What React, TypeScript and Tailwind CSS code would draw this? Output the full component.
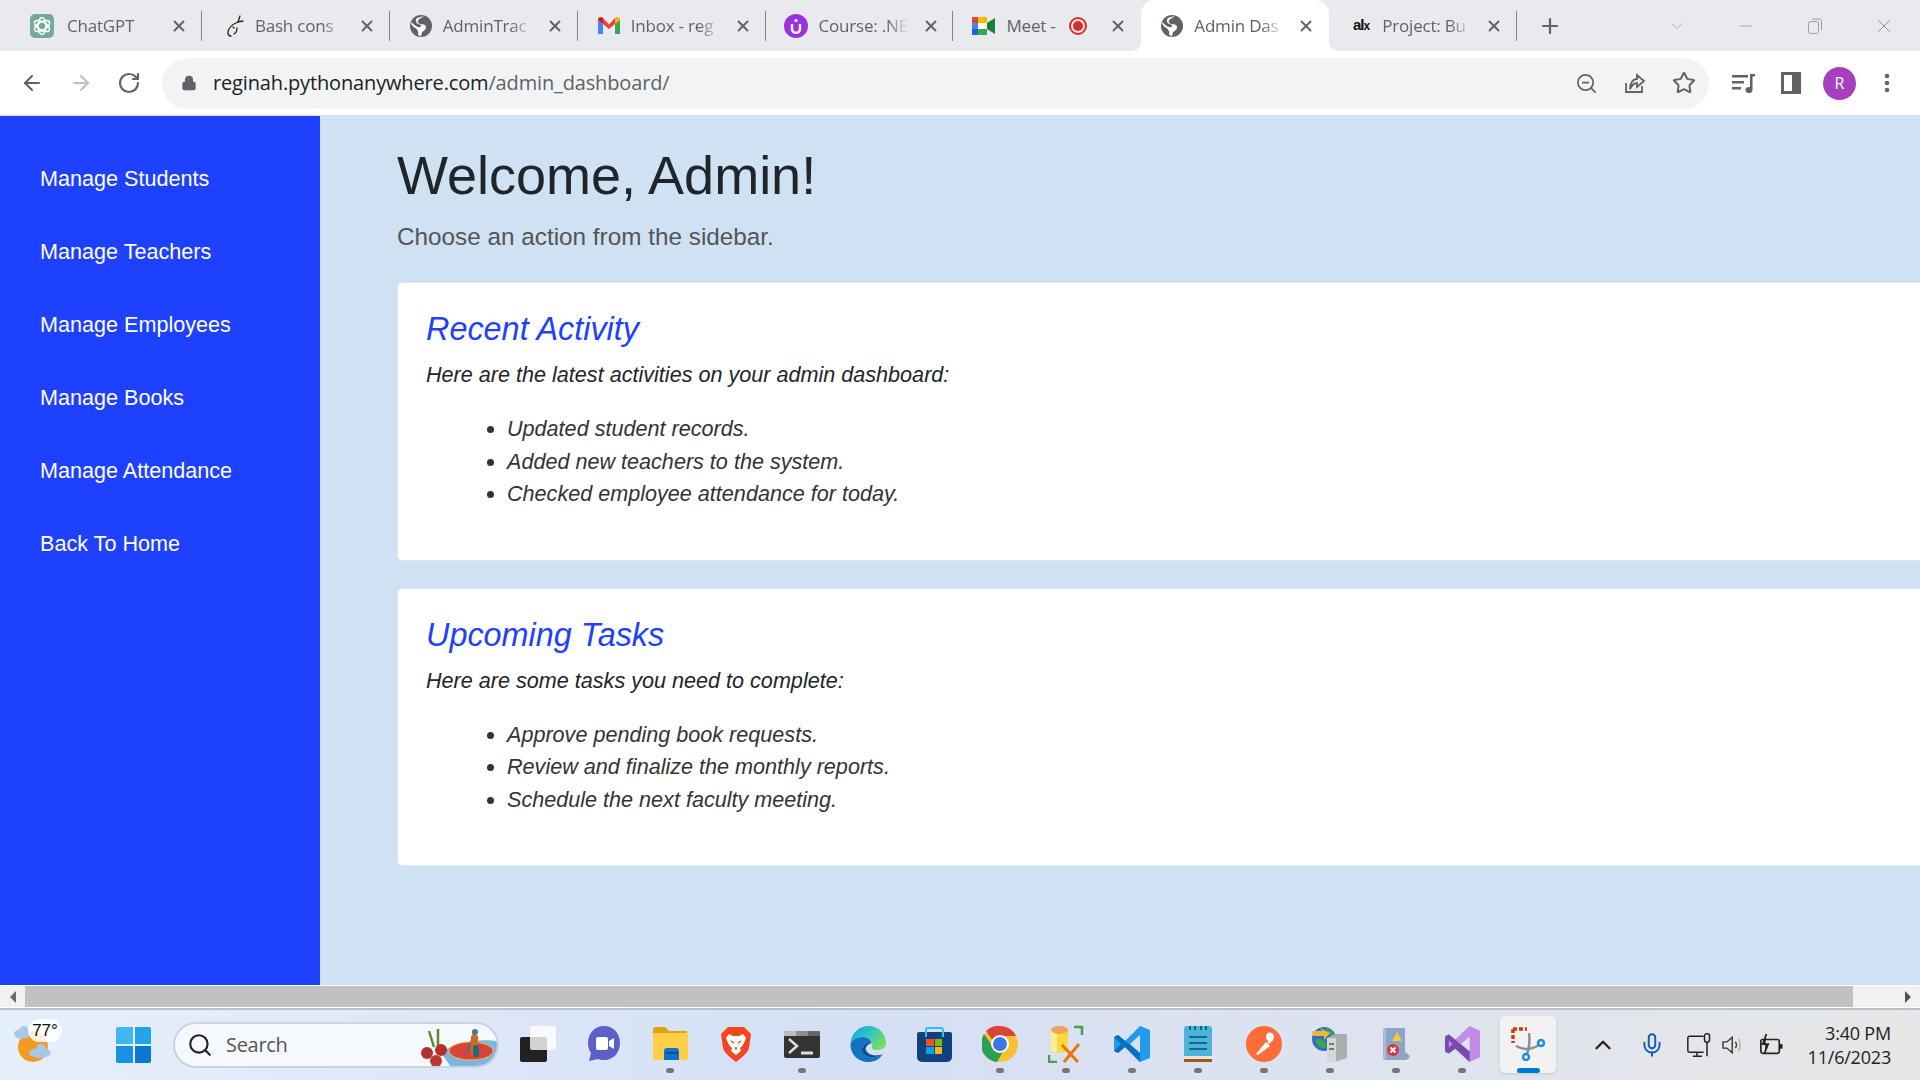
import { ReactNode } from "react";
import { X, Plus, ChevronDown, Minus, ArrowLeft, ArrowRight, RotateCw, Lock, ZoomOut, Star, EllipsisVertical, Search, ChevronUp, Mic } from "lucide-react";

const sans = "font-['Liberation_Sans',Arial,sans-serif]";

// favicons for the tab strip
function ChatGptIcon() {
  return (
    <svg width="24" height="24" viewBox="0 0 24 24" className="mr-[2px]">
      <rect width="24" height="24" rx="5" fill="#74aa9c" />
      <g fill="none" stroke="#fff" strokeWidth="1.6">
        <ellipse cx="12" cy="12" rx="4" ry="8.5" />
        <ellipse cx="12" cy="12" rx="4" ry="8.5" transform="rotate(60 12 12)" />
        <ellipse cx="12" cy="12" rx="4" ry="8.5" transform="rotate(120 12 12)" />
      </g>
    </svg>
  );
}

function SnakeIcon() {
  return (
    <svg width="18" height="22" viewBox="0 0 18 22" fill="none" stroke="#222" strokeWidth="1.3" strokeLinecap="round">
      <path d="M14 1 L12 7 L17 6" />
      <path d="M12 7 C7 9 2 13 2 18 C2 20 3 21 5 21" />
      <path d="M7 12 L8 13 M11 13 C11 16 10 18 8 19" />
    </svg>
  );
}

function GlobeIcon() {
  return (
    <svg width="22" height="22" viewBox="0 0 22 22">
      <circle cx="11" cy="11" r="11" fill="#5f6368" />
      <path d="M14 1 C11 3.5 7 4.5 8 7.5 C9 10 14 8.5 15.5 10.5 C17 13 15 15.5 12 17 L11 21.5 L8 19.5 C9 16.5 7 14 4.5 12.5 C3 11.5 2 10 1 9 L1.5 7 C3 9.5 5.5 11 8 12 C11 12.5 12.5 11 10 9.5 C6.5 9 4.5 6 7 3 Z" fill="#fff" />
    </svg>
  );
}

function GmailIcon() {
  return (
    <svg width="22" height="17" viewBox="0 0 22 17">
      <path d="M0 3 V17 H5 V7 Z" fill="#4285f4" />
      <path d="M17 7 V17 H22 V3 Z" fill="#34a853" />
      <path d="M0 3 C0 0.5 3 -0.5 5 1 L11 7.5 L17 1 C19 -0.5 22 0.5 22 3 L17 7 L11 12 L5 7 Z" fill="#ea4335" />
      <path d="M17 1 C19 -0.5 22 0.5 22 3 L17 7 Z" fill="#fbbc04" />
      <path d="M0 3 C0 0.5 3 -0.5 5 1 V7 Z" fill="#c5221f" />
    </svg>
  );
}

function CourseIcon() {
  return (
    <svg width="24" height="24" viewBox="0 0 24 24">
      <circle cx="12" cy="12" r="12" fill="#9b30e0" />
      <path d="M8 10 V15 C8 20 16 20 16 15 V10" fill="none" stroke="#fff" strokeWidth="2.4" />
      <circle cx="12" cy="6.5" r="1.6" fill="#fff" />
    </svg>
  );
}

function MeetIcon() {
  return (
    <svg width="23" height="18" viewBox="0 0 23 18">
      <rect x="0" y="0" width="6" height="6" fill="#ea4335" />
      <rect x="6" y="0" width="9" height="6" fill="#fbbc04" />
      <rect x="0" y="6" width="6" height="6" fill="#4285f4" />
      <rect x="0" y="12" width="6" height="6" fill="#1967d2" />
      <rect x="6" y="12" width="9" height="6" fill="#34a853" />
      <rect x="6" y="6" width="9" height="6" fill="#fff" />
      <path d="M15 6 L23 1 V17 L15 12 Z" fill="#188038" />
    </svg>
  );
}

function AlxIcon() {
  return <span className={`${sans} mr-[2px] text-[15px] font-bold tracking-[-1px] text-[#111]`}>al<span className="text-[12px]">x</span></span>;
}

type Tab = { title: string; icon: ReactNode; active?: boolean; rec?: boolean; sep?: boolean };

const tabs: Tab[] = [
  { title: "ChatGPT", icon: <ChatGptIcon />, sep: true },
  { title: "Bash cons", icon: <SnakeIcon />, sep: true },
  { title: "AdminTrac", icon: <GlobeIcon />, sep: true },
  { title: "Inbox - reg", icon: <GmailIcon />, sep: true },
  { title: "Course: .NE", icon: <CourseIcon />, sep: true },
  { title: "Meet -", icon: <MeetIcon />, rec: true },
  { title: "Admin Das", icon: <GlobeIcon />, active: true },
  { title: "Project: Bu", icon: <AlxIcon />, sep: true },
];

function TabItem({ tab }: { tab: Tab }) {
  return (
    <div className={`relative flex h-full w-[187.9px] shrink-0 items-center ${tab.active ? "rounded-t-[14px] bg-white" : ""}`}>
      {tab.active && (
        <>
          <div className="absolute bottom-0 left-[-10px] h-[10px] w-[10px] bg-[radial-gradient(circle_at_0_0,transparent_10px,white_10.5px)]" />
          <div className="absolute bottom-0 right-[-10px] h-[10px] w-[10px] bg-[radial-gradient(circle_at_100%_0,transparent_10px,white_10.5px)]" />
        </>
      )}
      <div className="flex w-[53px] shrink-0 items-center justify-end pr-[11px]">{tab.icon}</div>
      {tab.rec ? (
        <div className="w-[50px] whitespace-nowrap font-['Open_Sans',sans-serif] text-[17px] tracking-[-0.2px] text-[#5f6368]">{tab.title}</div>
      ) : (
        <div className="flex w-[90px] items-center overflow-hidden whitespace-nowrap font-['Open_Sans',sans-serif] text-[17px] tracking-[-0.2px] text-[#5f6368] [mask-image:linear-gradient(to_right,black_75%,transparent)]">
          {tab.title}
        </div>
      )}
      {tab.rec && (
        <div className="ml-[13px] flex h-[18px] w-[18px] items-center justify-center rounded-full border-2 border-[#d93025]">
          <div className="h-[10px] w-[10px] rounded-full bg-[#d93025]" />
        </div>
      )}
      <X className="absolute left-[156px] text-[#5f6368]" size={18} strokeWidth={2.5} />
      {tab.sep && <div className="absolute right-0 top-[11px] h-[30px] w-px bg-[#80868b]" />}
    </div>
  );
}

function ChromeBar() {
  return (
    <div className="flex h-[51px] shrink-0 items-stretch bg-[#e8eaed] pl-[14px]">
      {tabs.map((t) => (
        <TabItem key={t.title} tab={t} />
      ))}
      <div className="ml-[21px] flex items-center">
        <Plus size={24} strokeWidth={2.2} className="text-[#5f6368]" />
      </div>
      <div className="ml-[105px] flex items-center">
        <ChevronDown size={20} strokeWidth={1} className="text-[#9aa0a6]" />
      </div>
      <div className="ml-[49px] flex items-center">
        <Minus size={20} strokeWidth={1} className="text-[#9aa0a6]" />
      </div>
      <div className="ml-[51px] flex items-center">
        <svg width="16" height="18" viewBox="0 0 16 18" fill="none" stroke="#9aa0a6">
          <rect x="1.5" y="4.5" width="10" height="12" rx="2" />
          <path d="M5 2 H12 C14 2 14.5 3 14.5 5 V13" />
        </svg>
      </div>
      <div className="ml-[50px] flex items-center">
        <X size={22} strokeWidth={1} className="text-[#80868b]" />
      </div>
    </div>
  );
}

function Toolbar() {
  return (
    <div className="flex h-[65px] shrink-0 items-center border-b border-[#dcdfe3] bg-white">
      <div className="flex w-[162px] shrink-0 items-center pl-[20px]">
        <ArrowLeft size={24} strokeWidth={2} className="text-[#5f6368]" />
        <ArrowRight size={24} strokeWidth={2} className="ml-[25px] text-[#bdc1c6]" />
        <RotateCw size={24} strokeWidth={2.2} className="ml-[24px] text-[#5f6368]" />
      </div>
      <div className="flex h-[51px] w-[1547px] shrink-0 items-center rounded-full bg-[#f1f3f4] pl-[19px]">
        <Lock size={16} fill="#5f6368" className="text-[#5f6368]" />
        <div className="ml-[16px] font-['Open_Sans',sans-serif] text-[20px] tracking-[-0.15px] text-[#202124]">
          reginah.pythonanywhere.com<span className="text-[#5f6368]">/admin_dashboard/</span>
        </div>
        <div className="ml-auto flex items-center">
          <ZoomOut size={23} strokeWidth={1.8} className="text-[#5f6368]" />
          <svg width="24" height="24" viewBox="0 0 24 24" fill="none" stroke="#5f6368" strokeWidth="1.8" className="ml-[25px]">
            <path d="M3 12 V21 H19 V15" />
            <path d="M7 18 C7 12 10 8 14 8 V4 L21 10 L14 16 V12 C11 12 9 14 7 18 Z" />
          </svg>
          <Star size={24} strokeWidth={2} className="ml-[25px] mr-[13px] text-[#5f6368]" />
        </div>
      </div>
      <div className="flex items-center">
        <svg width="24" height="24" viewBox="0 0 24 24" fill="#5f6368" className="ml-[22px]">
          <rect x="1" y="4" width="16" height="2.5" />
          <rect x="1" y="10" width="12" height="2.5" />
          <rect x="1" y="16" width="9" height="2.5" />
          <rect x="19" y="3" width="2.5" height="15" />
          <rect x="19" y="3" width="5" height="2.5" />
          <ellipse cx="18" cy="19" rx="3.5" ry="3" />
        </svg>
        <div className="ml-[26px] h-[22px] w-[20px] border-[3px] border-r-[9px] border-[#5f6368]" />
        <div className="ml-[22px] flex h-[33px] w-[33px] items-center justify-center rounded-full bg-[#a83fbf] font-['Open_Sans',sans-serif] text-[16px] text-white">R</div>
        <EllipsisVertical size={24} strokeWidth={2.6} className="ml-[19px] text-[#5f6368]" />
      </div>
    </div>
  );
}

const navItems = ["Manage Students", "Manage Teachers", "Manage Employees", "Manage Books", "Manage Attendance", "Back To Home"];

function Sidebar() {
  return (
    <aside className="w-[320px] shrink-0 bg-[#1e40ff] pl-[40px] pt-[27px]">
      {navItems.map((item) => (
        <div key={item} className={`${sans} flex h-[73px] items-center text-[21.6px] text-white`}>
          {item}
        </div>
      ))}
    </aside>
  );
}

function Card({ title, intro, items, top }: { title: string; intro: string; items: string[]; top: string }) {
  return (
    <section className={`${top} w-[1700px] rounded-[5px] border border-[#dfe6ee] bg-white pb-[49px] pl-[28px] pt-[27px] italic ${sans}`}>
      <h3 className="text-[32.4px] leading-[38px] text-[#1e40ff]">{title}</h3>
      <p className="mt-[11px] text-[21.6px] leading-[32.4px] text-[#212529]">{intro}</p>
      <ul className="ml-[81px] mt-[22px] list-disc text-[21.6px] leading-[32.4px] text-[#333]">
        {items.map((i) => (
          <li key={i}>{i}</li>
        ))}
      </ul>
    </section>
  );
}

function Main() {
  return (
    <main className={`min-w-0 flex-1 overflow-hidden bg-[#cfe2f3] pl-[77px] pt-[27px] ${sans}`}>
      <h1 className="text-[54px] leading-[64px] text-[#212529]">Welcome, Admin!</h1>
      <p className="mt-[12px] text-[24.3px] leading-[36px] text-[#555]">Choose an action from the sidebar.</p>
      <Card
        top="mt-[27px]"
        title="Recent Activity"
        intro="Here are the latest activities on your admin dashboard:"
        items={["Updated student records.", "Added new teachers to the system.", "Checked employee attendance for today."]}
      />
      <Card
        top="mt-[27px]"
        title="Upcoming Tasks"
        intro="Here are some tasks you need to complete:"
        items={["Approve pending book requests.", "Review and finalize the monthly reports.", "Schedule the next faculty meeting."]}
      />
    </main>
  );
}

function ScrollBar() {
  return (
    <div className="flex h-[25px] shrink-0 flex-col bg-[#b9c0cc]">
      <div className="flex h-[23px] items-stretch border-y border-white bg-[#f1f1f1]">
        <div className="flex w-[25px] items-center justify-center">
          <div className="h-0 w-0 border-y-[6px] border-r-[6px] border-y-transparent border-r-[#6b6b6b]" />
        </div>
        <div className="flex-1 bg-[#c1c1c1]" />
        <div className="flex w-[67px] items-center justify-end pr-[9px]">
          <div className="h-0 w-0 border-y-[6px] border-l-[6px] border-y-transparent border-l-[#505050]" />
        </div>
      </div>
    </div>
  );
}

// taskbar icons
function WeatherIcon() {
  return (
    <div className="relative h-[50px] w-[50px]">
      <svg width="50" height="50" viewBox="0 0 50 50">
        <circle cx="25" cy="27" r="15" fill="#f39a1f" />
        <g fill="#a9c6ea">
          <ellipse cx="14" cy="14" rx="8" ry="5" />
          <ellipse cx="16" cy="10" rx="4" ry="4" />
          <ellipse cx="32" cy="33" rx="11" ry="5" />
          <ellipse cx="33" cy="29" rx="5" ry="5" />
        </g>
      </svg>
      <div className={`absolute left-[20px] top-[-1px] flex h-[23px] w-[34px] items-center justify-center rounded-full bg-white/85 ${sans} text-[17px] text-[#111]`}>77°</div>
    </div>
  );
}

function WindowsIcon() {
  return (
    <div className="grid h-[36px] w-[35px] shrink-0 grid-cols-2 gap-[2px]">
      <div className="rounded-tl-[2px] bg-[#3fb6f2]" />
      <div className="rounded-tr-[2px] bg-[#23a3ea]" />
      <div className="rounded-bl-[2px] bg-[#1a90e0]" />
      <div className="rounded-br-[2px] bg-[#0a78d4]" />
    </div>
  );
}

function SearchArt() {
  return (
    <svg width="76" height="44" viewBox="0 0 76 44" className="shrink-0">
      <path d="M20 30 C34 18 60 16 76 18 V36 C72 41 60 44 30 44 Z" fill="#7fb4dc" />
      <ellipse cx="50" cy="28" rx="22" ry="9" fill="#d9433a" stroke="#e8c23d" />
      <path d="M53 10 L48 26 L44 29" stroke="#50738a" strokeWidth="2" fill="none" />
      <rect x="50" y="12" width="7" height="20" rx="2" fill="#d06a24" />
      <rect x="52" y="22" width="6" height="12" rx="2" fill="#1f6b80" />
      <circle cx="54" cy="9" r="3" fill="#3d7f88" />
      <path d="M8 8 L13 24 M17 6 L17 22 L22 30" stroke="#5a8a30" strokeWidth="2.5" fill="none" />
      <circle cx="6" cy="30" r="6" fill="#b5302d" />
      <circle cx="15" cy="38" r="6" fill="#c23531" />
      <circle cx="20" cy="27" r="6" fill="#b5302d" />
    </svg>
  );
}

function TaskViewIcon() {
  return (
    <div className="relative h-[36px] w-[36px]">
      <div className="absolute bottom-0 left-0 h-[25px] w-[27px] rounded-[2px] bg-[#222]" />
      <div className="absolute right-0 top-0 h-[24px] w-[26px] rounded-[2px] bg-white/80" />
    </div>
  );
}

function TeamsIcon() {
  return (
    <svg width="34" height="38" viewBox="0 0 34 38">
      <path d="M17 1 C8 1 1 8 1 18 C1 22 2 25 4 28 L2 36 L11 34 C13 35 15 35 17 35 C27 35 33 27 33 18 C33 8 26 1 17 1 Z" fill="#5b5fc7" />
      <rect x="9" y="12" width="12" height="13" rx="2" fill="#fff" />
      <path d="M22 16 L27 13 V24 L22 21 Z" fill="#fff" />
    </svg>
  );
}

function FolderIcon() {
  return (
    <svg width="36" height="36" viewBox="0 0 36 36">
      <path d="M1 3 C1 2 2 1 3 1 H13 L17 5 H35 V33 H1 Z" fill="#dfa40f" />
      <rect x="1" y="7" width="35" height="27" rx="1" fill="#ffcf47" />
      <path d="M12 34 V25 C12 23 13 22 15 22 H24 C26 22 27 23 27 25 V34 Z" fill="#0d74c9" />
      <rect x="14" y="26" width="12" height="2" fill="#0a4f91" />
    </svg>
  );
}

function BraveIcon() {
  return (
    <svg width="32" height="36" viewBox="0 0 32 36">
      <path d="M8 1 H24 L28 5 L31 8 L29 22 C28 27 20 33 16 36 C12 33 4 27 3 22 L1 8 L4 5 Z" fill="#f4461d" />
      <path d="M9 8 L13 10 H19 L23 8 L26 12 L23 19 L20 22 L21 25 L16 29 L11 25 L12 22 L9 19 L6 12 Z" fill="#fff" />
      <path d="M11 15 L14 17 M21 15 L18 17 M16 21 V24" stroke="#f4461d" strokeWidth="1.5" />
    </svg>
  );
}

function TerminalIcon() {
  return (
    <div className="h-[27px] w-[36px] overflow-hidden rounded-[2px] bg-[#333]">
      <div className="flex h-[5px]">
        <div className="w-[12px] bg-[#bcbcbc]" />
        <div className="w-[12px] bg-[#8e8e8e]" />
        <div className="w-[12px] bg-[#666]" />
      </div>
      <svg width="36" height="22" viewBox="0 0 36 22" fill="none" stroke="#ddd" strokeWidth="2.5">
        <path d="M5 3 L13 10 L5 17" />
        <path d="M17 17 H29" strokeWidth="3" />
      </svg>
    </div>
  );
}

function EdgeIcon() {
  return (
    <svg width="36" height="36" viewBox="0 0 36 36">
      <defs>
        <linearGradient id="edgeTop" x1="0" y1="0" x2="1" y2="0.6">
          <stop offset="0" stopColor="#1c9fdc" />
          <stop offset="0.5" stopColor="#2bc4c8" />
          <stop offset="1" stopColor="#78dc62" />
        </linearGradient>
      </defs>
      <path d="M0.5 18 C1 7 9 0 19 0 C29 0 36 8 36 17 C36 22 32 24 27 24 C23 24 21 22 22 20 C24 16 20 11 13 11 C7 11 2 14 0.5 18 Z" fill="url(#edgeTop)" />
      <path d="M0.5 18 C2 14 7 11 13 11 C18 11 21 14 22 17 C16 15 11 20 12 25 C13 31 23 34 33 28 C29 34 24 36 18 36 C8 36 0 28 0.5 18 Z" fill="#1273c4" />
      <path d="M22 17 C16 15 11 20 12 25 C13 31 23 34 33 28 C25 31 18 29 16 24 C15 21 18 18 22 17 Z" fill="#0c4f94" />
    </svg>
  );
}

function StoreIcon() {
  return (
    <div className="relative flex h-[35px] w-[35px] items-end">
      <div className="absolute left-[8px] top-0 h-[10px] w-[19px] rounded-t-[3px] border-2 border-b-0 border-[#2fc0f0]" />
      <div className="grid h-[30px] w-[35px] place-items-center rounded-b-[5px] rounded-t-[2px] bg-[#11427f]">
        <div className="grid h-[15px] w-[16px] grid-cols-2 gap-px">
          <div className="bg-[#f25022]" />
          <div className="bg-[#7fba00]" />
          <div className="bg-[#00a4ef]" />
          <div className="bg-[#ffb900]" />
        </div>
      </div>
    </div>
  );
}

function ChromeIcon() {
  return (
    <svg width="36" height="36" viewBox="0 0 36 36">
      <circle cx="18" cy="18" r="18" fill="#fbc02d" />
      <path d="M18 0 A18 18 0 0 1 34 10 H18 A8 8 0 0 0 10.5 14 L4 5 A18 18 0 0 1 18 0 Z" fill="#db4437" />
      <path d="M2 8 A18 18 0 0 0 15 36 L21.5 25 A8 8 0 0 1 10.5 20 Z" fill="#2f9e55" />
      <circle cx="18" cy="18" r="9" fill="#fff" />
      <circle cx="18" cy="18" r="7" fill="#3b78e7" />
    </svg>
  );
}

function SqlToolIcon() {
  return (
    <svg width="36" height="38" viewBox="0 0 36 38">
      <path d="M3 5 H20 V26 C18 28 5 28 3 26 Z" fill="#ffd83d" />
      <path d="M3 5 H9 V27 C6 27 4 27 3 26 Z" fill="#ffeb92" />
      <ellipse cx="11.5" cy="5" rx="8.5" ry="4" fill="#eda35a" />
      <path d="M26 2 H34 V10 M1 30 V37 H9" fill="none" stroke="#46a04a" strokeWidth="2.5" />
      <path d="M14 20 L30 37 M31 19 L16 37" stroke="#e8760e" strokeWidth="3" />
    </svg>
  );
}

function VsCodeIcon() {
  return (
    <svg width="36" height="36" viewBox="0 0 36 36">
      <path d="M26 0 L36 4 V32 L26 36 L11 21 L4 27 L0 25 V11 L4 9 L11 15 Z M26 9 L16 18 L26 27 Z" fill="#1f9cf0" />
      <path d="M0 11 L4 9 L26 27 V36 L11 21 L4 27 L0 25 L7 18 Z" fill="#0a72bd" />
    </svg>
  );
}

function NotepadIcon() {
  return (
    <div className="flex h-[36px] w-[28px] flex-col overflow-hidden rounded-t-[3px] bg-[#4cb4d8]">
      <div className="flex h-[4px] justify-around px-[3px]">
        {[0, 1, 2, 3].map((n) => (
          <div key={n} className="h-[4px] w-[2px] bg-[#16617f]" />
        ))}
      </div>
      <div className="mt-[6px] flex flex-1 flex-col gap-[4px] px-[5px]">
        <div className="h-[2px] bg-[#126a8c]" />
        <div className="h-[2px] bg-[#126a8c]" />
        <div className="h-[2px] bg-[#126a8c]" />
      </div>
      <div className="h-[3px] bg-[#e9e5dd]" />
      <div className="h-[3px] bg-[#a5521a]" />
    </div>
  );
}

function PostmanIcon() {
  return (
    <svg width="36" height="36" viewBox="0 0 36 36">
      <circle cx="18" cy="18" r="18" fill="#ff6c37" />
      <path d="M10 28 L20 16 L24 20 L12 29 Z" fill="#fff" />
      <ellipse cx="24" cy="11" rx="4" ry="4.5" fill="#fff" />
      <path d="M22 17 L26 14" stroke="#fff" strokeWidth="2" />
    </svg>
  );
}

function ServerIcon() {
  return (
    <svg width="38" height="36" viewBox="0 0 38 36">
      <circle cx="13" cy="13" r="12" fill="#2f6fc4" />
      <path d="M4 14 C8 11 16 15 16 21 C12 24 6 21 4 14 Z" fill="#3fa34d" />
      <path d="M14 3 C18 3 23 6 24 11 L18 9 Z" fill="#3fa34d" />
      <path d="M1 5 H11 L9 2 L19 7 L13 14 L13 10 H4 C2 10 1 8 1 5 Z" fill="#f2b632" />
      <path d="M16 12 L24 8 H36 V32 L24 36 H16 Z" fill="#a9aeb1" />
      <rect x="16" y="12" width="9" height="24" fill="#d5d7d8" />
      <rect x="18" y="17" width="5" height="2" fill="#777" />
      <rect x="18" y="22" width="5" height="2" fill="#777" />
    </svg>
  );
}

function ReportIcon() {
  return (
    <svg width="30" height="36" viewBox="0 0 30 36">
      <path d="M22 24 L29 30 C28 33 26 34 22 34 Z" fill="#9aa3ad" />
      <rect x="2" y="2" width="22" height="32" rx="2" fill="#a7bad6" />
      <rect x="5" y="2" width="19" height="32" fill="#8ba4c8" />
      <path d="M16 6 L21 15 H11 Z" fill="#f5ce2e" />
      <circle cx="12" cy="24" r="6" fill="#d43a3a" />
      <path d="M9.5 21.5 L14.5 26.5 M14.5 21.5 L9.5 26.5" stroke="#fff" strokeWidth="1.8" />
    </svg>
  );
}

function VisualStudioIcon() {
  return (
    <svg width="37" height="36" viewBox="0 0 37 38">
      <path d="M26 0 L37 5 V33 L26 38 L11 24 L4 29 L0 27 V11 L4 9 L11 14 Z M26 11 L17 19 L26 27 Z" fill="#c08ce8" />
      <path d="M0 11 L4 9 L26 27 V38 L11 24 L4 29 L0 27 L0 11 Z M4 15 V23 L8 19 Z" fill="#774bab" fillRule="evenodd" />
    </svg>
  );
}

function SnipIcon() {
  return (
    <svg width="34" height="34" viewBox="0 0 34 34" fill="none">
      <path d="M2 2 H16 M2 2 V16" stroke="#d03a0c" strokeWidth="3.5" strokeDasharray="4 2" />
      <path d="M5 19 C12 23 20 23 28 18" stroke="#8a8f94" strokeWidth="2.5" />
      <path d="M18 6 C19 14 18 22 16 27" stroke="#8a8f94" strokeWidth="2.5" />
      <circle cx="30" cy="16" r="3" stroke="#1c8fe0" strokeWidth="2.5" />
      <circle cx="15" cy="30" r="3" stroke="#1c8fe0" strokeWidth="2.5" />
    </svg>
  );
}

type Cell = { key: string; icon: ReactNode; dot?: boolean; active?: boolean };

const cells: Cell[] = [
  { key: "taskview", icon: <TaskViewIcon /> },
  { key: "teams", icon: <TeamsIcon /> },
  { key: "folder", icon: <FolderIcon />, dot: true },
  { key: "brave", icon: <BraveIcon /> },
  { key: "terminal", icon: <TerminalIcon />, dot: true },
  { key: "edge", icon: <EdgeIcon /> },
  { key: "store", icon: <StoreIcon /> },
  { key: "chrome", icon: <ChromeIcon />, dot: true },
  { key: "sql", icon: <SqlToolIcon />, dot: true },
  { key: "vscode", icon: <VsCodeIcon />, dot: true },
  { key: "notepad", icon: <NotepadIcon />, dot: true },
  { key: "postman", icon: <PostmanIcon />, dot: true },
  { key: "server", icon: <ServerIcon />, dot: true },
  { key: "report", icon: <ReportIcon />, dot: true },
  { key: "vs", icon: <VisualStudioIcon />, dot: true },
  { key: "snip", icon: <SnipIcon />, active: true },
];

function TaskCell({ cell }: { cell: Cell }) {
  return (
    <div className="relative flex h-full w-[66px] shrink-0 items-center justify-center pb-[2px]">
      {cell.active && <div className="absolute left-[5px] top-[6px] h-[57px] w-[56px] rounded-[5px] bg-[#f2f2f2] shadow-sm" />}
      <div className="relative">{cell.icon}</div>
      {cell.dot && <div className="absolute bottom-[7px] h-[5px] w-[8px] rounded-full bg-[#777]" />}
      {cell.active && <div className="absolute bottom-[7px] h-[5px] w-[23px] rounded-full bg-[#0078d4]" />}
    </div>
  );
}

function Taskbar() {
  return (
    <div className="flex h-[70px] shrink-0 items-center bg-gradient-to-r from-[#e6f0fb] via-[#d5dff5] via-[45%] to-[#e7e7e7]">
      <div className="flex w-[66px] shrink-0 justify-center">
        <WeatherIcon />
      </div>
      <div className="ml-[50px]">
        <WindowsIcon />
      </div>
      <div className="ml-[22px] flex h-[46px] w-[326px] shrink-0 items-center overflow-hidden rounded-full border-2 border-[#c8d3e3] bg-[#f5f9fe] pl-[12px]">
        <Search size={26} strokeWidth={2} className="text-[#222]" />
        <span className="ml-[13px] font-['Open_Sans',sans-serif] text-[20px] tracking-[-0.3px] text-[#555]">Search</span>
        <div className="ml-auto flex">
          <SearchArt />
        </div>
      </div>
      <div className="ml-[6px] flex h-full">
        {cells.map((c) => (
          <TaskCell key={c.key} cell={c} />
        ))}
      </div>
      <ChevronUp size={26} strokeWidth={2.2} className="ml-[29px] shrink-0 text-[#222]" />
      <Mic size={26} strokeWidth={1.8} className="ml-[23px] shrink-0 text-[#0f5bb5]" />
      <svg width="25" height="25" viewBox="0 0 30 30" fill="none" stroke="#222" strokeWidth="1.8" className="ml-[22px] shrink-0">
        <path d="M20 4 H3 C2 4 1 5 1 6 V21 C1 22 2 23 3 23 H20" />
        <path d="M7 28 H18 M12 23 V28" />
        <rect x="21" y="1" width="6" height="10" rx="2.5" />
        <path d="M24 11 V28" />
      </svg>
      <svg width="24" height="20" viewBox="0 0 28 26" fill="none" stroke="#333" strokeWidth="1.8" className="ml-[9px] shrink-0">
        <path d="M1 9 H6 L13 3 V23 L6 17 H1 Z" />
        <path d="M17 9 C19 11 19 15 17 17" />
        <path d="M21 5 C24 9 24 17 21 21" stroke="#aaa" />
      </svg>
      <svg width="26" height="24" viewBox="0 0 28 26" fill="none" stroke="#222" strokeWidth="1.8" className="ml-[13px] shrink-0">
        <rect x="3" y="7" width="20" height="15" rx="2" />
        <path d="M25 12 V17" strokeWidth="3" />
        <path d="M9 1 L5 12 H11 L7 22" fill="#222" />
      </svg>
      <div className="ml-auto pr-[29px] text-right font-['Open_Sans',sans-serif] text-[18px] leading-[24px] tracking-[-0.2px] text-[#222]">
        <div>3:40 PM</div>
        <div>11/6/2023</div>
      </div>
    </div>
  );
}

export default function App() {
  return (
    <div className="flex h-screen w-[1920px] flex-col overflow-hidden">
      <ChromeBar />
      <Toolbar />
      <div className="flex min-h-0 flex-1">
        <Sidebar />
        <Main />
      </div>
      <ScrollBar />
      <Taskbar />
    </div>
  );
}
